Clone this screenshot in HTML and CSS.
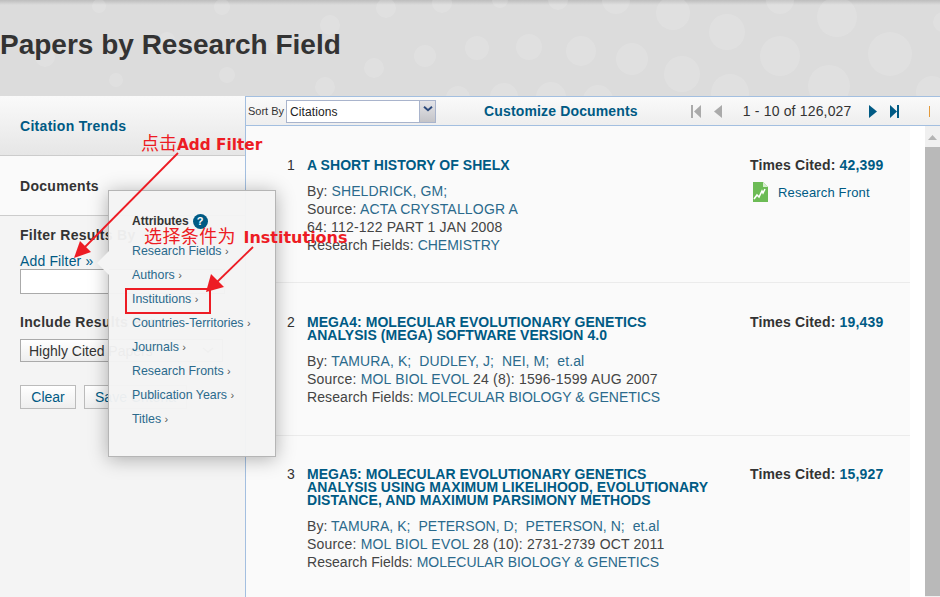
FILE: index.html
```html
<!DOCTYPE html>
<html lang="en">
<head>
<meta charset="utf-8">
<title>Papers by Research Field</title>
<link rel="stylesheet" href="styles.css">
</head>
<body>
<header class="banner">
  <svg class="dots" width="940" height="96" viewBox="0 0 940 96">
    <g fill="#fff" fill-opacity=".13">
      <circle cx="99" cy="6" r="7"/><circle cx="222" cy="7" r="8"/><circle cx="386" cy="8" r="10"/><circle cx="330" cy="25" r="10"/>
      <circle cx="45" cy="57" r="10"/><circle cx="167" cy="40" r="8"/><circle cx="277" cy="47" r="8"/><circle cx="425" cy="56" r="11"/>
      <circle cx="374" cy="68" r="10"/><circle cx="227" cy="75" r="8"/><circle cx="116" cy="80" r="7"/><circle cx="325" cy="87" r="10"/>
      <circle cx="458" cy="98" r="12"/><circle cx="442" cy="3" r="10"/><circle cx="477" cy="48" r="12"/>
      <circle cx="500" cy="0" r="8"/><circle cx="558" cy="0" r="10"/><circle cx="616" cy="0" r="14"/><circle cx="780" cy="0" r="14"/>
      <circle cx="673" cy="13" r="17"/><circle cx="727" cy="32" r="18"/><circle cx="780" cy="56" r="20"/><circle cx="837" cy="17" r="20"/>
      <circle cx="890" cy="54" r="22"/><circle cx="829" cy="86" r="21"/><circle cx="932" cy="92" r="16"/><circle cx="730" cy="93" r="19"/>
      <circle cx="682" cy="74" r="18"/><circle cx="632" cy="59" r="16"/><circle cx="581" cy="51" r="15"/><circle cx="529" cy="47" r="13"/>
      <circle cx="504" cy="97" r="14"/><circle cx="551" cy="97" r="15"/><circle cx="598" cy="100" r="15"/><circle cx="943" cy="22" r="10"/>
    </g>
  </svg>
  <h1 class="banner-title">Papers by Research Field</h1>
</header>

<div class="workspace">
  <aside class="sidebar">
    <div class="tab tab-muted"><a class="tab-link">Citation Trends</a></div>
    <div class="tab tab-active"><span class="tab-label">Documents</span></div>
    <div class="filters">
      <div class="filter-head">Filter Results By <span class="help help-faint">?</span></div>
      <a class="add-filter">Add Filter »</a>
      <div class="text-field"></div>
      <div class="filter-head include-head">Include Results For</div>
      <div class="select-field"><span>Highly Cited Papers</span><svg class="select-chev" width="12" height="7" viewBox="0 0 12 7"><path d="M1 1l5 4 5-4" fill="none" stroke="#8a8a8a" stroke-width="1.5"/></svg></div>
      <div class="actions">
        <button class="btn btn-clear">Clear</button>
        <button class="btn btn-save">Save Criteria</button>
      </div>
    </div>
  </aside>

  <main class="results">
    <div class="toolbar">
      <span class="sort-label">Sort By</span>
      <div class="sort-select">
        <span class="sort-value">Citations</span>
        <span class="sort-btn"><svg width="10" height="6" viewBox="0 0 10 6"><path d="M1 0.8l4 3.4 4-3.4" fill="none" stroke="#2c4a7c" stroke-width="2"/></svg></span>
      </div>
      <a class="customize">Customize Documents</a>
      <div class="pager">
        <svg class="pg-first" width="10" height="13" viewBox="0 0 10 13"><path d="M0 0h2v13H0zM10 0v13L3 6.500z" fill="#aaa"/></svg>
        <svg class="pg-prev" width="8" height="13" viewBox="0 0 8 13"><path d="M8 0v13L0 6.500z" fill="#aaa"/></svg>
        <span class="pg-text">1 - 10 of 126,027</span>
        <svg class="pg-next" width="8" height="13" viewBox="0 0 8 13"><path d="M0 0v13l8-6.500z" fill="#005a84"/></svg>
        <svg class="pg-last" width="9" height="13" viewBox="0 0 9 13"><path d="M0 0v13l7-6.500zM7 0h2v13H7z" fill="#005a84"/></svg>
        <span class="pg-tick"></span>
      </div>
    </div>
    <div class="list-wrap">
      <div class="list">
        <article class="row row-first">
          <div class="num">1</div>
          <div class="doc">
            <a class="doc-title">A SHORT HISTORY OF SHELX</a>
            <p class="meta">By: <a>SHELDRICK, GM;</a></p>
            <p class="meta meta-source">Source: <a>ACTA CRYSTALLOGR A</a></p>
            <p class="meta meta-source"><span>64</span>: 112-122 PART 1 JAN 2008</p>
            <p class="meta meta-fields">Research Fields: <a>CHEMISTRY</a></p>
          </div>
          <div class="cites">
            <div class="cited">Times Cited: <b>42,399</b></div>
            <div class="front">
              <svg width="15" height="20" viewBox="0 0 15 20"><path d="M0 0h10l5 5v15H0z" fill="#6cbb55"/><path d="M10 0v5h5z" fill="#d7edd0"/><path d="M1 17l3-4 2 2 3-6 1 2 2-4" fill="none" stroke="#fff" stroke-width="1.6"/></svg>
              <a>Research Front</a>
            </div>
          </div>
        </article>
        <article class="row row-second">
          <div class="num">2</div>
          <div class="doc">
            <a class="doc-title">MEGA4: MOLECULAR EVOLUTIONARY GENETICS ANALYSIS (MEGA) SOFTWARE VERSION 4.0</a>
            <p class="meta">By: <a>TAMURA, K;</a>&nbsp; <a>DUDLEY, J;</a>&nbsp; <a>NEI, M;</a>&nbsp; <a>et.al</a></p>
            <p class="meta meta-source">Source: <a>MOL BIOL EVOL</a> 24 (8): 1596-1599 AUG 2007</p>
            <p class="meta meta-fields">Research Fields: <a>MOLECULAR BIOLOGY &amp; GENETICS</a></p>
          </div>
          <div class="cites"><div class="cited">Times Cited: <b>19,439</b></div></div>
        </article>
        <article class="row row-third">
          <div class="num">3</div>
          <div class="doc">
            <a class="doc-title">MEGA5: MOLECULAR EVOLUTIONARY GENETICS ANALYSIS USING MAXIMUM LIKELIHOOD, EVOLUTIONARY DISTANCE, AND MAXIMUM PARSIMONY METHODS</a>
            <p class="meta">By: <a>TAMURA, K;</a>&nbsp; <a>PETERSON, D;</a>&nbsp; <a>PETERSON, N;</a>&nbsp; <a>et.al</a></p>
            <p class="meta meta-source">Source: <a>MOL BIOL EVOL</a> 28 (10): 2731-2739 OCT 2011</p>
            <p class="meta meta-fields">Research Fields: <a>MOLECULAR BIOLOGY &amp; GENETICS</a></p>
          </div>
          <div class="cites"><div class="cited">Times Cited: <b>15,927</b></div></div>
        </article>
      </div>
      <div class="scrollbar">
        <svg class="scroll-arrow" width="9" height="5" viewBox="0 0 9 5"><path d="M4.500 0L9 5H0z" fill="#b4b4b4"/></svg>
        <div class="scroll-thumb"></div>
      </div>
    </div>
  </main>
</div>

<div class="popup">
  <span class="nib"></span>
  <div class="popup-head">Attributes <span class="help">?</span></div>
  <ul class="popup-list">
    <li><a>Research Fields</a> <i>›</i></li>
    <li><a>Authors</a> <i>›</i></li>
    <li class="picked"><a>Institutions</a> <i>›</i></li>
    <li><a>Countries-Territories</a> <i>›</i></li>
    <li><a>Journals</a> <i>›</i></li>
    <li><a>Research Fronts</a> <i>›</i></li>
    <li><a>Publication Years</a> <i>›</i></li>
    <li><a>Titles</a> <i>›</i></li>
  </ul>
</div>

<div class="note note-a">点击<b>Add Filter</b></div>
<div class="note note-b">选择条件为 <b>Institutions</b></div>
<svg class="arrows" width="940" height="597" viewBox="0 0 940 597">
  <g stroke="#ed1c24" stroke-width="1.800" fill="#ed1c24">
    <path d="M178 153L84 248" fill="none"/>
    <path d="M74 258l6-17 11 11z" stroke="none"/>
    <path d="M253 247L216 283" fill="none"/>
    <path d="M206 292l5-18 13 13z" stroke="none"/>
  </g>
</svg>
</body>
</html>
```
FILE: styles.css
```css
* { box-sizing: border-box; }
html, body { margin: 0; height: 597px; overflow: hidden; }
body { position: relative; font-family: "Liberation Sans", Arial, sans-serif; color: #333; background: #fafafa; }
a { color: #005a84; text-decoration: none; }
p { margin: 0; }

.banner { position: relative; height: 96px; background: linear-gradient(#bdbdbd 0, #dcdcdc 5px, #dcdcdc 100%); overflow: hidden; padding-top: 29px; }
.dots { position: absolute; left: 0; top: 0; }
.banner-title { position: relative; margin: 0; font-size: 28px; line-height: 32px; font-weight: bold; color: #333; }

.workspace { display: flex; height: 501px; }
.sidebar { width: 245px; flex: none; background: #f4f4f4; }
.tab { height: 60px; padding-left: 20px; display: flex; align-items: center; font-size: 14px; font-weight: bold; letter-spacing: .3px; }
.tab-muted { background: linear-gradient(#fafafa, #e6e6e6); border-bottom: 1px solid #ccc; }
.tab-link { padding-top: 1px; }
.tab-active { background: #fafafa; border-bottom: 1px solid #ccc; color: #333; }
.filters { padding: 11px 20px 0; }
.filter-head { font-size: 14px; font-weight: bold; line-height: 16px; letter-spacing: .3px; color: #333; }
.add-filter { display: block; margin-top: 9px; font-size: 14px; line-height: 16px; letter-spacing: .15px; }
.text-field { width: 205px; height: 25px; background: #fff; border: 1px solid #aaa; }
.include-head { margin-top: 20px; }
.select-field { display: flex; justify-content: space-between; align-items: center; width: 203px; height: 23px; margin-top: 9px; padding: 0 8px; border: 1px solid #aaa; background: linear-gradient(#fff, #eee); font-size: 14px; }
.actions { display: flex; gap: 8px; margin-top: 23px; }
.btn { height: 24px; padding: 0; border: 1px solid #bbb; background: linear-gradient(#fff, #eee); font-family: inherit; font-size: 14px; color: #005a84; }
.btn-clear { width: 56px; }
.btn-save { width: 103px; white-space: nowrap; }

.results { flex: 1; min-width: 0; border-left: 1px solid #a3bfe0; display: flex; flex-direction: column; }
.toolbar { height: 30px; flex: none; display: flex; align-items: center; padding-left: 2px; border-top: 1px solid #a3bfe0; border-bottom: 1px solid #a3bfe0; background: linear-gradient(#fafafa, #eee); }
.sort-label { font-size: 11px; color: #333; width: 38px; }
.sort-select { display: flex; width: 150px; height: 23px; border: 1px solid #a9b4cc; background: #fff; }
.sort-value { flex: 1; font-size: 12px; line-height: 23px; padding-left: 3px; color: #222; letter-spacing: .1px; }
.sort-btn { width: 16px; display: flex; align-items: flex-start; justify-content: center; padding-top: 5px; background: linear-gradient(#e4e4e8, #c4c4c8); border-left: 1px solid #a9b4cc; }
.customize { margin-left: 48px; font-size: 14px; font-weight: bold; letter-spacing: .15px; }
.pager { display: flex; align-items: center; margin-left: 53px; }
.pg-prev { margin-left: 13px; }
.pg-text { margin-left: 21px; font-size: 14px; letter-spacing: .17px; color: #333; }
.pg-next { margin-left: 17px; }
.pg-last { margin-left: 13px; }
.pg-tick { width: 1px; height: 11px; margin-left: 30px; background: #e39a3c; }

.list-wrap { flex: 1; display: flex; min-height: 0; background: #fff; }
.list { width: 664px; flex: none; background: #fafafa; overflow: hidden; }
.row { display: flex; padding-left: 41px; border-bottom: 1px solid #ebebeb; }
.row-first { height: 157px; padding-top: 33px; }
.row-second { height: 153px; padding-top: 33px; }
.row-third { border-bottom: 0; padding-top: 32px; }
.num { width: 20px; flex: none; font-size: 14px; line-height: 15px; color: #333; margin-top: -1px; }
.doc { width: 443px; flex: none; }
.doc-title { display: block; max-width: 403px; font-size: 14px; line-height: 13px; font-weight: bold; letter-spacing: .05px; margin-bottom: 10px; }
.meta { font-size: 14px; line-height: 18px; color: #444; letter-spacing: .1px; }
.row-third .meta { letter-spacing: .04px; }
.meta.meta-source { letter-spacing: .19px; }
.meta.meta-fields a { letter-spacing: 0; }
.meta a { color: #2b6a8c; }
.cites { margin-top: -1px; }
.cited { font-size: 14px; line-height: 15px; font-weight: bold; letter-spacing: .15px; color: #333; white-space: nowrap; }
.cited b { color: #005a84; }
.front { display: flex; align-items: center; gap: 10px; margin: 9px 0 0 3px; font-size: 13px; letter-spacing: .15px; }
.scrollbar { width: 15px; margin-left: 15px; flex: none; background: #f0f0f0; }
.scroll-arrow { display: block; margin: 9px auto 7px; }
.scroll-thumb { height: 449px; background: #b9b9b9; }

.popup { position: absolute; left: 108px; top: 190px; width: 168px; height: 267px; padding: 23px 0 0 23px; background: rgba(244,244,244,.96); border: 1px solid #b5b5b5; box-shadow: 0 2px 18px rgba(0,0,0,.3); }
.nib { position: absolute; left: -12px; top: 60px; width: 12px; height: 24px; background: #f4f4f4; clip-path: polygon(100% 0, 100% 100%, 0 50%); }
.popup-head { display: flex; align-items: center; gap: 4px; font-size: 12px; line-height: 15px; font-weight: bold; color: #333; }
.help { display: inline-block; width: 15px; height: 15px; border-radius: 50%; background: #005a84; color: #fff; font-size: 11px; font-weight: bold; line-height: 15px; text-align: center; }
.help-faint { opacity: .12; margin-left: 2px; }
.popup-list { list-style: none; margin: 10px 0 0; padding: 0; }
.popup-list li { height: 24px; font-size: 12.400px; line-height: 24px; white-space: nowrap; color: #005a84; }
.popup-list a { color: #2b6a8c; }
.popup-list i { font-style: normal; font-size: 11px; color: #555; }
.picked { position: relative; }
.picked::after { content: ""; position: absolute; left: -7px; top: 1px; width: 82px; height: 22px; border: 2px solid #ed1c24; }

.note { position: absolute; font-family: "Noto Sans CJK SC", sans-serif; font-size: 18px; line-height: 20px; color: #ed1c24; white-space: nowrap; }
.note b { font-family: "DejaVu Sans", sans-serif; font-size: 15.300px; font-weight: bold; }
.note-a { left: 141px; top: 132px; }
.note-b { left: 144px; top: 225px; letter-spacing: .4px; }
.note-b b { margin-left: 3px; font-size: 16px; letter-spacing: 0; }
.arrows { position: absolute; left: 0; top: 0; pointer-events: none; }
```
